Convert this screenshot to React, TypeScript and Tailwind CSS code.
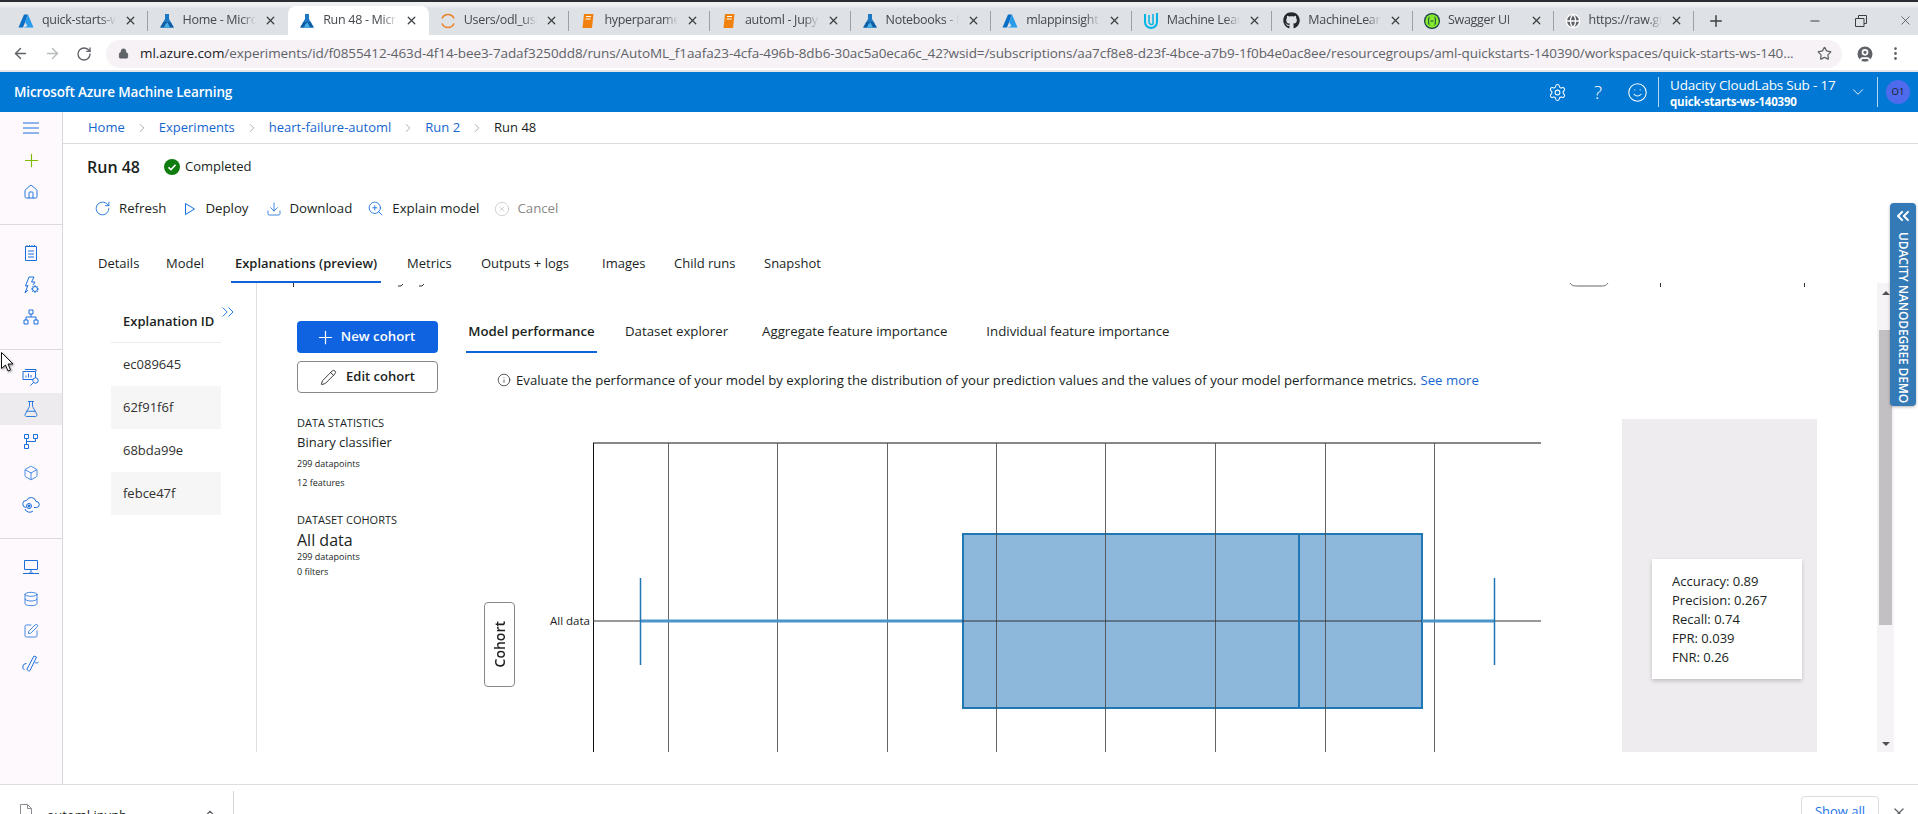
import React from "react";
import {
  ArrowLeft,
  ArrowRight,
  Box,
  ChevronDown,
  ChevronRight,
  ChevronUp,
  ChevronsLeft,
  ChevronsRight,
  CircleUser,
  Database,
  Download,
  EllipsisVertical,
  FlaskConical,
  Globe,
  Home,
  Info,
  Lock,
  Minus,
  Pencil,
  Plus,
  RotateCw,
  Settings,
  Smile,
  SquarePen,
  Star,
  X,
  XCircle,
  ZoomIn,
} from "lucide-react";
import { FaGithub } from "react-icons/fa";

const AzureLogo = () => (
  <svg viewBox="0 0 16 16" className="h-4 w-4 shrink-0">
    <path d="M6 1.5h4L5 14.5H0.5z" fill="#0a6fc4" />
    <path d="M10 1.5l5.5 13H5.5l4-1.5L7 9z" fill="#2a9be8" />
  </svg>
);

const FlaskLogo = () => (
  <svg viewBox="0 0 16 16" className="h-[18px] w-[16px] shrink-0">
    <path d="M6 1h4v5l5 8.5H1L6 6z" fill="#1c78c2" />
    <path d="M4.5 9h7l3 5.5H1.5z" fill="#0f5da3" />
    <path d="M6.5 11l2-1.5 2.5 5h-6z" fill="#49b1e8" />
  </svg>
);

const JupyterLogo = () => (
  <svg viewBox="0 0 16 16" className="h-4 w-4 shrink-0" fill="none">
    <path d="M2 5.5a6.5 6.5 0 0 1 12 0" stroke="#e8832a" strokeWidth="1.6" />
    <path d="M2 10.5a6.5 6.5 0 0 0 12 0" stroke="#e8832a" strokeWidth="1.6" />
  </svg>
);

const BookLogo = () => (
  <svg viewBox="0 0 16 16" className="h-4 w-4 shrink-0">
    <path d="M4 1h9.5L12 15H2.5z" fill="#f0810f" />
    <path d="M6 3.5h5M5.6 6h5" stroke="#fff" strokeWidth="1" />
  </svg>
);

const UdacityLogo = () => (
  <svg viewBox="0 0 16 18" className="h-[18px] w-4 shrink-0" fill="none">
    <path d="M2 2v8a6 6 0 0 0 12 0V1" stroke="#02b3e4" strokeWidth="2" />
    <path d="M6 3v7a2.5 2.5 0 0 0 4 2V2" stroke="#02b3e4" strokeWidth="1.5" />
  </svg>
);

const SwaggerLogo = () => (
  <svg viewBox="0 0 16 16" className="h-4 w-4 shrink-0">
    <circle cx="8" cy="8" r="8" fill="#173647" />
    <circle cx="8" cy="8" r="6.8" fill="#85ea2d" />
    <path d="M5.5 4C4 4 5.5 8 4 8c1.5 0 0 4 1.5 4M10.5 4c1.5 0 0 4 1.5 4-1.5 0 0 4-1.5 4M6.5 8h3" stroke="#173647" strokeWidth="1" fill="none" />
  </svg>
);

const browserTabs = [
  { title: "quick-starts-ws-140390 - Microsoft", icon: <AzureLogo />, sep: true },
  { title: "Home - Microsoft Azure", icon: <FlaskLogo /> },
  { title: "Run 48 - Microsoft Azure", icon: <FlaskLogo />, active: true },
  { title: "Users/odl_user_140390", icon: <JupyterLogo />, sep: true },
  { title: "hyperparameter_tuning", icon: <BookLogo />, sep: true },
  { title: "automl - Jupyter Notebook", icon: <BookLogo />, sep: true },
  { title: "Notebooks - Microsoft", icon: <FlaskLogo />, sep: true },
  { title: "mlappinsight140390", icon: <AzureLogo />, sep: true },
  { title: "Machine Learning Engineer", icon: <UdacityLogo />, sep: true },
  { title: "MachineLearningEngineer", icon: <FaGithub className="h-[17px] w-[17px] shrink-0 text-[#24292e]" />, sep: true },
  { title: "Swagger UI", icon: <SwaggerLogo />, sep: true },
  { title: "https://raw.githubusercontent", icon: <Globe className="h-4 w-4 shrink-0 fill-[#5f6368] text-white" />, sep: true },
];

const NotebookIcon = () => (
  <svg viewBox="0 0 16 18" className="h-[18px] w-4" fill="none" stroke="currentColor">
    <path d="M2.5 2.5h11v14h-11zM4 1v2M6.5 1v2M9 1v2M11.500 1v2M5 7h6M5 10h6M5 13h6" />
  </svg>
);

const ZapGearIcon = () => (
  <svg viewBox="0 0 18 18" className="h-[18px] w-[18px]" fill="none" stroke="currentColor">
    <path d="M7 1h5L9.500 6H13l-2 3M6 9l-3 8 3-3M7 1L3.500 10H6" />
    <circle cx="13" cy="13" r="2.500" />
    <path d="M13 9v1.500M13 15.500V17M9 13h1.500M15.500 13H17M10.300 10.300l1 1M14.700 14.700l1 1M15.700 10.300l-1 1M11.300 14.700l-1 1" />
  </svg>
);

const HierarchyIcon = () => (
  <svg viewBox="0 0 16 16" className="h-4 w-4" fill="none" stroke="currentColor">
    <path d="M6 1h4v4H6zM1 11h4v4H1zM11 11h4v4h-4zM8 5v3M3 11V8h10v3" />
  </svg>
);

const ChartSearchIcon = () => (
  <svg viewBox="0 0 18 18" className="h-[18px] w-[18px]" fill="none" stroke="currentColor">
    <path d="M3 1.500h11v2M1 3.500h12.500v8H1zM4 9.500v-2M6.500 9.500v-4M9 9.500V7" />
    <circle cx="13.500" cy="12.500" r="2.700" fill="#fdf9fd" />
    <path d="M11.500 14.500L8.500 17.500" />
  </svg>
);

const PipelineIcon = () => (
  <svg viewBox="0 0 16 16" className="h-4 w-4" fill="none" stroke="currentColor">
    <path d="M1.500 1.500h4v4h-4zM10.500 1.500h4v4h-4zM1.500 11.500h4v4h-4zM3.500 5.500v6M3.500 8.500h9v-3" />
  </svg>
);

const CloudIcon = () => (
  <svg viewBox="0 0 18 16" className="h-4 w-[18px]" fill="none" stroke="currentColor">
    <path d="M4 10.500a3.500 3.500 0 0 1 .5-7A5 5 0 0 1 14 4.500a3 3 0 0 1 .5 6H12M3 12a5 5 0 0 0 8 2" />
    <circle cx="7" cy="9" r="2.500" />
    <circle cx="7" cy="9" r="1" fill="currentColor" />
  </svg>
);

const ComputeIcon = () => (
  <svg viewBox="0 0 16 16" className="h-4 w-4" fill="none" stroke="currentColor">
    <path d="M1.500 1.500h13v9h-13zM8 10.500v2M0 14.500h16M6 14.500l2-2 2 2" />
  </svg>
);

const ToolsIcon = () => (
  <svg viewBox="0 0 18 18" className="h-[18px] w-[18px]" fill="none" stroke="currentColor">
    <path d="M5 15L12 2l2.500 1.200L8 16.500c-1 1-2.500.3-3-1.500zM4.500 9.500a3.500 3.500 0 0 0-2 6.500M12.500 8a2.500 2.500 0 0 0 4 0" />
  </svg>
);

const CursorArrow = () => (
  <svg viewBox="0 0 14 21" className="absolute left-[1px] top-[352px] h-[21px] w-[14px] drop-shadow-[1px_1px_1px_rgba(0,0,0,0.4)]">
    <path d="M0.500 0.500v16l4-3.500 2.500 6 2.500-1-2.500-6h5z" fill="#fff" stroke="#111" />
  </svg>
);

const navGroups = [
  {
    wrap: "pb-4 border-b border-[#dcdadc]",
    items: [
      { icon: <svg viewBox="0 0 16 12" className="h-3 w-4" fill="none" stroke="currentColor"><path d="M0 1h16M0 6h16M0 11h16" /></svg> },
      { icon: <Plus className="h-[21px] w-[21px] text-[#7fba00]" strokeWidth={1.3} /> },
      { icon: <Home className="h-4 w-4" strokeWidth={1.4} /> },
    ],
  },
  {
    wrap: "pt-3 pb-4 border-b border-[#dcdadc]",
    items: [
      { icon: <NotebookIcon /> },
      { icon: <ZapGearIcon /> },
      { icon: <HierarchyIcon /> },
    ],
  },
  {
    wrap: "pt-[11px] pb-[17px] border-b border-[#dcdadc]",
    items: [
      { icon: <ChartSearchIcon /> },
      { icon: <FlaskConical className="h-[18px] w-[18px]" strokeWidth={1.2} />, selected: true },
      { icon: <PipelineIcon /> },
      { icon: <Box className="h-4 w-4" strokeWidth={1.2} /> },
      { icon: <CloudIcon /> },
    ],
  },
  {
    wrap: "pt-3",
    items: [
      { icon: <ComputeIcon /> },
      { icon: <Database className="h-4 w-4" strokeWidth={1.2} /> },
      { icon: <SquarePen className="h-4 w-4" strokeWidth={1.2} /> },
      { icon: <ToolsIcon /> },
    ],
  },
];

const pageTabs = [
  { label: "Details", width: "w-[68px]" },
  { label: "Model", width: "w-[68px]" },
  { label: "Explanations (preview)", width: "w-[173px]", active: true },
  { label: "Metrics", width: "w-[74px]" },
  { label: "Outputs + logs", width: "w-[121px]" },
  { label: "Images", width: "w-[72px]" },
  { label: "Child runs", width: "w-[90px]" },
  { label: "Snapshot", width: "w-[70px]" },
];

const explanationIds = [
  { id: "ec089645", rowBg: "" },
  { id: "62f91f6f", rowBg: "bg-[#f6f6f6]" },
  { id: "68bda99e", rowBg: "" },
  { id: "febce47f", rowBg: "bg-[#f6f6f6]" },
];

const gridLines = [668, 777, 887, 996, 1105, 1215, 1325, 1434];

const BoxChart = () => (
  <svg viewBox="515 419 1030 333" className="h-[333px] w-[1030px] shrink-0">
    <rect x="963" y="534" width="459" height="174" fill="#8db8dc" stroke="#1f77b4" strokeWidth="2" />
    <line x1="593" y1="443" x2="1541" y2="443" stroke="#111" />
    <line x1="593.500" y1="443" x2="593.500" y2="752" stroke="#111" />
    {gridLines.map((x) => (
      <line key={x} x1={x + 0.5} y1="443" x2={x + 0.5} y2="752" stroke="#4a4a4a" strokeOpacity="0.85" />
    ))}
    <line x1="593" y1="621" x2="1541" y2="621" stroke="#333" />
    <line x1="640" y1="621" x2="962" y2="621" stroke="#4a94c9" strokeWidth="3" />
    <line x1="1422" y1="621" x2="1494" y2="621" stroke="#4a94c9" strokeWidth="3" />
    <line x1="640.500" y1="578" x2="640.500" y2="665" stroke="#1f77b4" strokeWidth="1.500" />
    <line x1="1494.500" y1="578" x2="1494.500" y2="665" stroke="#1f77b4" strokeWidth="1.500" />
    <line x1="1299" y1="534" x2="1299" y2="708" stroke="#1f77b4" strokeWidth="2" />
    <text x="590" y="625" textAnchor="end" className="fill-[#222] text-[11.5px]">
      All data
    </text>
  </svg>
);

export default function App() {
  return (
    <div className="relative flex h-[814px] w-[1918px] flex-col overflow-hidden bg-white font-['Open_Sans',sans-serif] text-[#201f1e]">
      {/* browser tabs */}
      <div className="h-[2px] bg-[#2a2d31]" />
      <div className="flex h-[33px] items-end bg-gradient-to-b from-[#eef0f2] from-10% to-[#dee1e6] to-20% pl-[7px]">
        {browserTabs.map((tab) => (
          <div
            key={tab.title}
            className={
              tab.active
                ? "flex h-[29px] w-[140.6px] items-center gap-2 rounded-t-lg bg-white pl-[11px]"
                : "flex h-[29px] w-[140.6px] items-center gap-2 pl-[11px]"
            }
          >
            {tab.icon}
            <span className="w-[78px] overflow-hidden whitespace-nowrap text-[12.5px] tracking-[-0.3px] text-[#45494e] [mask-image:linear-gradient(to_right,black_80%,transparent)]">
              {tab.title}
            </span>
            <X className="ml-auto h-[13px] w-[13px] shrink-0 text-[#3c4043]" strokeWidth={2.4} />
            {tab.sep ? <div className="ml-[2px] mr-0 h-[20px] w-px shrink-0 bg-[#9aa0a6]" /> : <div className="ml-[2px] h-[20px] w-px shrink-0" />}
          </div>
        ))}
        <Plus className="mb-[5px] ml-[13px] h-[18px] w-[18px] text-[#3c4043]" strokeWidth={2} />
        <div className="mb-[7px] ml-auto flex w-[115px] items-center text-[#3c4043]">
          <Minus className="ml-[5px] h-[14px] w-[14px]" />
          <svg viewBox="0 0 12 12" className="ml-[33px] h-3 w-3" fill="none" stroke="currentColor">
            <path d="M3.500 3V.5h8v8H9M.5 3.500h8.500v8H.5z" />
          </svg>
          <X className="ml-[31px] h-[15px] w-[15px]" strokeWidth={1.2} />
        </div>
      </div>

      {/* address bar */}
      <div className="flex h-[37px] items-center border-b-2 border-[#e4e6ea] bg-white pt-[2px]">
        <ArrowLeft className="ml-[12px] h-[17px] w-[17px] text-[#5f6368]" />
        <ArrowRight className="ml-[15px] h-[17px] w-[17px] text-[#b8babd]" />
        <RotateCw className="ml-[15px] h-[16px] w-[16px] text-[#5f6368]" />
        <div className="ml-[14px] flex h-[28px] w-[1736px] items-center rounded-full bg-[#f6f2f6] pl-[12px]">
          <Lock className="h-[11px] w-[11px] fill-[#5f6368] text-[#5f6368]" />
          <span className="ml-[11px] w-[1660px] whitespace-nowrap text-[13.5px] tracking-[-0.08px] text-[#5f6368]">
            <span className="text-[#202124]">ml.azure.com</span>
            /experiments/id/f0855412-463d-4f14-bee3-7adaf3250dd8/runs/AutoML_f1aafa23-4cfa-496b-8db6-30ac5a0eca6c_42?wsid=/subscriptions/aa7cf8e8-d23f-4bce-a7b9-1f0b4e0ac8ee/resourcegroups/aml-quickstarts-140390/workspaces/quick-starts-ws-140...
          </span>
          <Star className="ml-auto mr-[10px] h-[15px] w-[15px] text-[#5f6368]" />
        </div>
        <CircleUser className="ml-[13px] h-[20px] w-[20px] fill-[#5f6368] text-white" />
        <EllipsisVertical className="ml-[12px] h-[17px] w-[17px] text-[#5f6368]" />
      </div>

      {/* azure header */}
      <div className="flex h-[40px] items-center bg-[#0078d4] pl-[14px] text-white">
        <span className="text-[13.5px] font-semibold tracking-[-0.15px]">Microsoft Azure Machine Learning</span>
        <Settings className="ml-auto h-[19px] w-[19px]" strokeWidth={1.3} />
        <span className="ml-[21px] w-[20px] text-center text-[19px] font-light">?</span>
        <Smile className="ml-[19px] h-[21px] w-[21px]" strokeWidth={1.2} />
        <div className="ml-[10px] h-[30px] w-px bg-[#b3d7f2]" />
        <div className="ml-[11px] w-[179px] pt-[2px]">
          <div className="text-[13.500px] leading-[18px] tracking-[-0.2px]">Udacity CloudLabs Sub - 17</div>
          <div className="text-[11.500px] font-bold leading-[16px] tracking-[-0.2px]">quick-starts-ws-140390</div>
        </div>
        <ChevronDown className="h-[18px] w-[18px]" strokeWidth={1.2} />
        <div className="ml-[10px] h-[30px] w-px bg-[#b3d7f2]" />
        <div className="ml-[8px] mr-[8px] flex h-6 w-6 items-center justify-center rounded-full bg-[#4f6bed] text-[9.500px] text-[#1b1a19]">
          O1
        </div>
      </div>

      <div className="flex h-[672px]">
        {/* side nav */}
        <div className="w-[63px] shrink-0 border-r border-[#d9d7d9] bg-[#fdf9fd] text-[#1a6fdc]">
          {navGroups.map((group, i) => (
            <div key={i} className={group.wrap}>
              {group.items.map((item, j) => (
                <div key={j} className={item.selected ? "flex h-8 items-center justify-center bg-[#edebed]" : "flex h-8 items-center justify-center"}>
                  {item.icon}
                </div>
              ))}
            </div>
          ))}
        </div>

        <div className="flex min-w-0 flex-1 flex-col">
          {/* breadcrumb */}
          <div className="flex h-[32px] shrink-0 items-center border-b border-[#dddbda] pl-[25px] text-[13px] text-[#1666d0]">
            <span>Home</span>
            <ChevronRight className="mx-[10px] h-[14px] w-[14px] text-[#8a8886]" strokeWidth={1.2} />
            <span>Experiments</span>
            <ChevronRight className="mx-[10px] h-[14px] w-[14px] text-[#8a8886]" strokeWidth={1.2} />
            <span>heart-failure-automl</span>
            <ChevronRight className="mx-[10px] h-[14px] w-[14px] text-[#8a8886]" strokeWidth={1.2} />
            <span>Run 2</span>
            <ChevronRight className="mx-[10px] h-[14px] w-[14px] text-[#8a8886]" strokeWidth={1.2} />
            <span className="text-[#201f1e]">Run 48</span>
          </div>

          {/* title */}
          <div className="flex h-[46px] shrink-0 items-center pl-[24px]">
            <span className="text-[16px] font-semibold">Run 48</span>
            <svg viewBox="0 0 16 16" className="ml-[24px] h-4 w-4">
              <circle cx="8" cy="8" r="8" fill="#107c10" />
              <path d="M4.500 8.300l2.500 2.400 4.500-5" stroke="#fff" strokeWidth="1.600" fill="none" />
            </svg>
            <span className="ml-[5px] text-[13px]">Completed</span>
          </div>

          {/* toolbar */}
          <div className="flex h-[36px] shrink-0 items-center pl-[31px] pt-[1px] text-[13.25px]">
            <RotateCw className="h-[17px] w-[17px] text-[#0f6cdb]" strokeWidth={1.2} />
            <span className="ml-[8px]">Refresh</span>
            <svg viewBox="0 0 12 14" className="ml-[18px] h-[14px] w-3 text-[#0f6cdb]" fill="none" stroke="currentColor">
              <path d="M1.500 1.500l9 5.500-9 5.500z" />
            </svg>
            <span className="ml-[9px]">Deploy</span>
            <Download className="ml-[17px] h-[16px] w-[16px] text-[#0f6cdb]" strokeWidth={1.2} />
            <span className="ml-[8px]">Download</span>
            <ZoomIn className="ml-[15px] h-[17px] w-[17px] text-[#0f6cdb]" strokeWidth={1.2} />
            <span className="ml-[8px]">Explain model</span>
            <XCircle className="ml-[15px] h-[16px] w-[16px] text-[#c8c6c4]" strokeWidth={1.2} />
            <span className="ml-[7px] text-[#8a8886]">Cancel</span>
          </div>

          {/* page tabs */}
          <div className="flex h-[57px] shrink-0 items-end pl-[35px] text-[13px]">
            {pageTabs.map((tab) => (
              <div
                key={tab.label}
                className={
                  tab.active
                    ? `${tab.width} flex h-[36px] items-center font-semibold`
                    : `${tab.width} flex h-[36px] items-center pb-[3px]`
                }
              >
                {tab.active ? (
                  <span className="-ml-[3px] flex h-full w-[150px] items-center justify-center border-b-2 border-[#0f62d8] pb-[1px] whitespace-nowrap">
                    {tab.label}
                  </span>
                ) : (
                  <span className="whitespace-nowrap">{tab.label}</span>
                )}
              </div>
            ))}
          </div>

          {/* body */}
          <div className="relative flex h-[469px] shrink-0">
            <svg viewBox="0 0 1600 6" className="absolute left-[193px] top-0 h-[6px] w-[1600px]" fill="none" stroke="#333">
              <path d="M37.500 0v4M142 3h3l2-2M163 3h3l2-2" />
              <path d="M1314 0c2 3 4 3 8 3h22c4 0 6 0 8-3" stroke="#666" />
              <path d="M1404.500 0v4M1548.500 0v4" />
            </svg>

            {/* explanation list */}
            <div className="w-[194px] shrink-0 border-r border-[#e1dfdd] pl-[48px]">
              <div className="relative flex h-[60px] w-[110px] items-end border-b border-[#edebe9] pb-[11px] pl-[12px] text-[13px] font-semibold">
                Explanation ID
                <ChevronsRight className="absolute -right-[17px] top-[19px] h-[20px] w-[20px] text-[#0f6cdb]" strokeWidth={1.1} />
              </div>
              {explanationIds.map((row) => (
                <div key={row.id} className={`flex h-[43px] w-[110px] items-center pl-[12px] pt-[1px] text-[13px] text-[#323130] ${row.rowBg}`}>
                  {row.id}
                </div>
              ))}
            </div>

            {/* cohort column */}
            <div className="w-[209px] shrink-0 pl-[40px] pt-[38px]">
              <div className="flex h-[32px] w-[141px] items-center justify-center gap-[5px] rounded-sm bg-[#0f62e0] text-[13.25px] font-semibold text-white">
                <Plus className="-ml-[5px] h-[21px] w-[21px]" strokeWidth={1.4} />
                New cohort
              </div>
              <div className="mt-[8px] flex h-[32px] w-[141px] items-center justify-center gap-[9px] rounded-sm border border-[#8a8886] text-[13px] font-semibold">
                <Pencil className="h-[17px] w-[17px]" strokeWidth={1.2} />
                Edit cohort
              </div>
              <div className="mt-[22px] text-[11px] leading-[16px]">DATA STATISTICS</div>
              <div className="mt-[1px] text-[13px] leading-[20px]">Binary classifier</div>
              <div className="mt-[3px] text-[9px] leading-[18px]">299 datapoints</div>
              <div className="text-[9px] leading-[19px]">12 features</div>
              <div className="mt-[20px] text-[11px] leading-[16px]">DATASET COHORTS</div>
              <div className="mt-[1px] text-[16px] leading-[22px]">All data</div>
              <div className="mt-[-1px] text-[9px] leading-[14px]">299 datapoints</div>
              <div className="text-[9px] leading-[15px]">0 filters</div>
            </div>

            {/* dashboard */}
            <div className="min-w-0 flex-1 pt-[38px]">
              <div className="flex h-[32px] items-start pt-[1px] text-[13.25px]">
                <div className="flex h-[31px] w-[131px] justify-center border-b-2 border-[#0f62d8] font-semibold whitespace-nowrap">Model performance</div>
                <div className="ml-[28px]">Dataset explorer</div>
                <div className="ml-[34px]">Aggregate feature importance</div>
                <div className="ml-[39px]">Individual feature importance</div>
              </div>
              <div className="flex h-[53px] items-center pl-[31px] pt-[2px] text-[13.2px]">
                <Info className="mb-[2px] mr-[5px] h-[14px] w-[14px]" strokeWidth={1.2} />
                Evaluate the performance of your model by exploring the distribution of your prediction values and the values of your model performance metrics.
                <span className="ml-[4px] text-[#1666d0]">See more</span>
              </div>
              <div className="mt-[13px] flex h-[333px]">
                <div className="ml-[18px] mt-[183px] flex h-[85px] w-[31px] shrink-0 items-center justify-center rounded-sm border border-[#8a8886] text-[14px] font-semibold">
                  <span className="rotate-180 [writing-mode:vertical-rl]">Cohort</span>
                </div>
                <BoxChart />
                <div className="ml-[77px] h-[333px] w-[195px] shrink-0 bg-[#efecef] pl-[30px] pt-[140px]">
                  <div className="h-[120px] w-[150px] bg-white pl-[20px] pt-[13px] text-[13px] leading-[19px] shadow-[0_2px_4px_rgba(0,0,0,0.2)]">
                    <div>Accuracy: 0.89</div>
                    <div>Precision: 0.267</div>
                    <div>Recall: 0.74</div>
                    <div>FPR: 0.039</div>
                    <div>FNR: 0.26</div>
                  </div>
                </div>
              </div>
            </div>

            {/* scrollbar */}
            <div className="mr-[24px] flex w-[17px] shrink-0 flex-col items-center justify-between bg-[#f6f3f6] pt-[1px] pb-0">
              <div className="flex h-[42px] w-full flex-col items-center">
                <div className="mt-[7px] h-0 w-0 border-x-[4px] border-b-[4px] border-x-transparent border-b-[#505050]" />
                <div className="mt-[19px] h-[13px] w-[13px]" />
              </div>
              <div className="h-[295px] w-[13px] bg-[#c2c0c2]" />
              <div className="mb-[6px] mt-[114px] h-0 w-0 border-x-[4px] border-t-[4px] border-x-transparent border-t-[#505050]" />
            </div>
          </div>
        </div>
      </div>

      {/* downloads bar */}
      <div className="flex h-[30px] items-start overflow-hidden border-t border-[#dedde3] bg-white">
        <svg viewBox="0 0 12 16" className="ml-[20px] mt-[19px] h-4 w-3 shrink-0" fill="none" stroke="#8a8d91">
          <path d="M.5.500h7l4 4v11H.5zM7.500.500v4h4" />
        </svg>
        <span className="ml-[15px] mt-[21px] text-[13px] leading-[18px]">automl.ipynb</span>
        <ChevronUp className="ml-[76px] mt-[21px] h-[14px] w-[14px] text-[#5f6368]" />
        <div className="ml-[16px] mt-[6px] h-[30px] w-px bg-[#d4d4d6]" />
        <div className="ml-auto mt-[11px] flex h-[30px] w-[78px] justify-center rounded border border-[#dadce0] pt-[5px] text-[13px] text-[#1a73e8]">
          Show all
        </div>
        <X className="ml-[12px] mr-[11px] mt-[20px] h-[16px] w-[16px] text-[#5f6368]" strokeWidth={2} />
      </div>

      {/* udacity widget */}
      <div className="absolute left-[1890px] top-[203px] flex h-[203px] w-[26px] flex-col items-center rounded-sm bg-[#337ab7] pt-[3px] text-white shadow-[0_1px_3px_rgba(0,0,0,0.3)]">
        <ChevronsLeft className="h-[20px] w-[20px]" strokeWidth={2.4} />
        <span className="mt-[6px] whitespace-nowrap text-[12px] font-semibold tracking-[-0.15px] [writing-mode:vertical-rl]">
          UDACITY NANODEGREE DEMO
        </span>
      </div>

      <CursorArrow />
    </div>
  );
}
